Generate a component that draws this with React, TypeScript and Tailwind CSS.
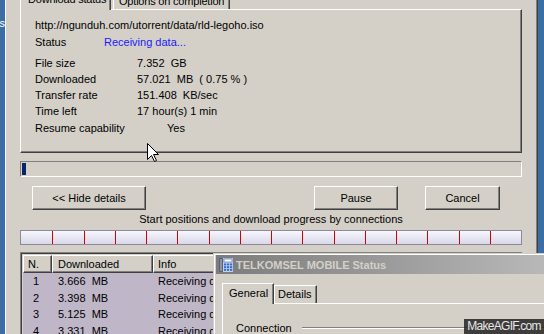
const INFO = [
  ['File size', '7.352  GB'],
  ['Downloaded', '57.021  MB  ( 0.75 % )'],
  ['Transfer rate', '151.408  KB/sec'],
  ['Time left', '17 hour(s) 1 min'],
];

const ROWS = [
  { n: 1, size: '3.666  MB' },
  { n: 2, size: '3.398  MB' },
  { n: 3, size: '5.125  MB' },
  { n: 4, size: '3.331  MB' },
];

const raised = 'border-t border-l border-white border-r border-b border-r-[#404040] border-b-[#404040] shadow-[inset_-1px_-1px_0_#808080]';

function PhoneIcon() {
  return (
    <svg width="16" height="16" viewBox="0 0 16 16">
      <rect x="1" y="1" width="14" height="14" fill="#c8d0dc" />
      <rect x="1" y="1" width="4" height="14" fill="#5a6478" />
      <rect x="2" y="2" width="2" height="12" fill="#8a94a8" />
      <rect x="6" y="2" width="8" height="3" fill="#ffffff" stroke="#3060c0" strokeWidth="0.6" />
      {[0, 1, 2].map(r =>
        [0, 1, 2].map(c => (
          <rect key={`${r}-${c}`} x={6 + c * 3} y={6.5 + r * 2.7} width="2.2" height="1.9" fill="#2f6bd8" />
        ))
      )}
    </svg>
  );
}

export default function App() {
  return (
    <div className="relative w-[544px] h-[334px] overflow-hidden flex bg-[#3a6ea5] text-[11px] text-black font-['Liberation_Sans',Arial,sans-serif]">
      {/* desktop strip, left */}
      <div className="w-[5px] overflow-hidden flex justify-end pt-[15px] text-white leading-[16px] whitespace-nowrap">
        <span>is</span>
      </div>

      {/* download dialog */}
      <div className="w-[533px] h-full bg-[#d4d0c8] border-l border-white border-r border-r-[#404040] shadow-[inset_-1px_0_0_#808080] pl-[14px] pr-[15px] flex flex-col">
        {/* tabs */}
        <div className="relative z-10 flex items-end h-[20px] -mt-[11px] shrink-0 tracking-[-0.2px] leading-[16px]">
          <div className="w-[91px] h-[22px] -mb-px bg-[#d4d0c8] pl-[7px] pt-[2px] border-t border-l border-white border-r border-r-[#404040] shadow-[inset_-1px_0_0_#808080] whitespace-nowrap">
            Download status
          </div>
          <div className="ml-[2px] w-[117px] h-[19px] pl-[5px] pt-[2px] border-t border-l border-white border-r border-r-[#404040] shadow-[inset_-1px_0_0_#808080] whitespace-nowrap">
            Options on completion
          </div>
        </div>

        {/* status panel */}
        <div className={`h-[144px] shrink-0 ${raised} pl-[14px] pt-[7px] leading-[16px]`}>
          <div>http://ngunduh.com/utorrent/data/rld-legoho.iso</div>
          <div className="mt-px flex">
            <span className="w-[69px]">Status</span>
            <span className="text-[#1a1aff]">Receiving data...</span>
          </div>
          <div className="mt-[5px]">
            {INFO.map(([k, v]) => (
              <div key={k} className="flex">
                <span className="w-[102px]">{k}</span>
                <span className="whitespace-pre">{v}</span>
              </div>
            ))}
            <div className="flex mt-px">
              <span className="w-[132px]">Resume capability</span>
              <span>Yes</span>
            </div>
          </div>
        </div>

        {/* progress bar */}
        <div className="mt-[8px] h-[16px] shrink-0 border-t border-l border-[#808080] border-r border-b border-r-white border-b-white p-px">
          <div className="w-[4px] h-[12px] bg-[#0a246a]" />
        </div>

        {/* buttons */}
        <div className="mt-[9px] flex shrink-0 pl-[12px] pr-[22px] leading-[16px]">
          <button className={`w-[114px] h-[24px] ${raised} flex items-center justify-center`}>&lt;&lt; Hide details</button>
          <div className="flex-1" />
          <button className={`w-[84px] h-[24px] ${raised} flex items-center justify-center`}>Pause</button>
          <button className={`ml-[27px] w-[75px] h-[24px] ${raised} flex items-center justify-center`}>Cancel</button>
        </div>

        <div className="mt-px text-center leading-[16px] shrink-0">Start positions and download progress by connections</div>

        {/* connections bar */}
        <div className="mt-[3px] h-[15px] shrink-0 border border-[#8a8a9c] bg-gradient-to-b from-[#f7f7fc] to-[#d8d8ea] grid grid-cols-16">
          {Array.from({ length: 16 }).map((_, i) => (
            <div key={i} className={i === 0 ? '' : 'border-l border-[#d00000]'} />
          ))}
        </div>

        {/* connections list */}
        <div className="mt-[7px] flex-1 border-t border-l border-[#808080] shadow-[inset_1px_1px_0_#404040] pl-[2px] pt-[2px]">
          <div className="flex h-[18px] leading-[16px]">
            <div className={`w-[29px] ${raised} pl-[4px]`}>N.</div>
            <div className={`w-[101px] ${raised} pl-[5px]`}>Downloaded</div>
            <div className={`flex-1 ${raised} pl-[4px]`}>Info</div>
          </div>
          <div className="bg-[#bfb7c8] h-full">
            {ROWS.map(r => (
              <div key={r.n} className="flex h-[16.5px] leading-[16.5px]">
                <span className="w-[29px] pl-[10px]">{r.n}</span>
                <span className="w-[101px] pl-[6px] whitespace-pre">{r.size}</span>
                <span className="w-[61px] pl-[5px] overflow-hidden whitespace-nowrap">Receiving data...</span>
              </div>
            ))}
          </div>
        </div>
      </div>

      {/* desktop strip, right */}
      <div className="flex-1" />

      {/* TELKOMSEL window, inactive, lying over the dialog */}
      <div className="absolute left-[213px] top-[253px] w-[340px] h-[100px] bg-[#d4d0c8] border-t border-l border-[#d4d0c8]">
        <div className="h-full border-t border-l border-white pl-px">
          <div className="h-[19px] flex items-center bg-gradient-to-r from-[#7c7c7c] to-[#bababa] pl-[2px]">
            <PhoneIcon />
            <span className="ml-[2px] font-bold text-[#d4d0c8] leading-[16px] whitespace-nowrap">TELKOMSEL MOBILE Status</span>
          </div>
          <div className="pl-[6px] pt-[9px]">
            <div className="flex items-end h-[20px] leading-[16px]">
              <div className="relative z-10 w-[52px] h-[21px] -mb-px bg-[#d4d0c8] pl-[6px] pt-px border-t border-l border-white border-r border-r-[#404040] shadow-[inset_-1px_0_0_#808080]">
                General
              </div>
              <div className="w-[43px] h-[18px] pl-[3px] border-t border-l border-white border-r border-r-[#404040] shadow-[inset_-1px_0_0_#808080]">
                Details
              </div>
            </div>
            <div className="border-t border-l border-white pl-[13px] pt-[16px] flex items-start leading-[16px]">
              <span>Connection</span>
              <div className="ml-[10px] mt-[7px] flex-1 h-[2px] border-t border-[#808080] border-b border-b-white" />
            </div>
          </div>
        </div>
      </div>

      {/* mouse pointer */}
      <svg className="absolute left-[147px] top-[143px]" width="13" height="20" viewBox="0 0 13 20">
        <path d="M0.5 0.5 V16.5 L4.5 12.5 L7.5 18.5 L9.5 17.5 L6.5 11.5 H11.5 Z" fill="#fff" stroke="#000" strokeWidth="1" strokeLinejoin="miter" />
      </svg>

      {/* watermark */}
      <div className="absolute right-0 bottom-0 w-[80px] h-[15px] bg-[rgba(35,35,35,0.85)] text-[#e8e8e8] text-[12px] leading-[15px] tracking-[-0.7px] flex justify-center">
        MakeAGIF.com
      </div>
    </div>
  );
}
